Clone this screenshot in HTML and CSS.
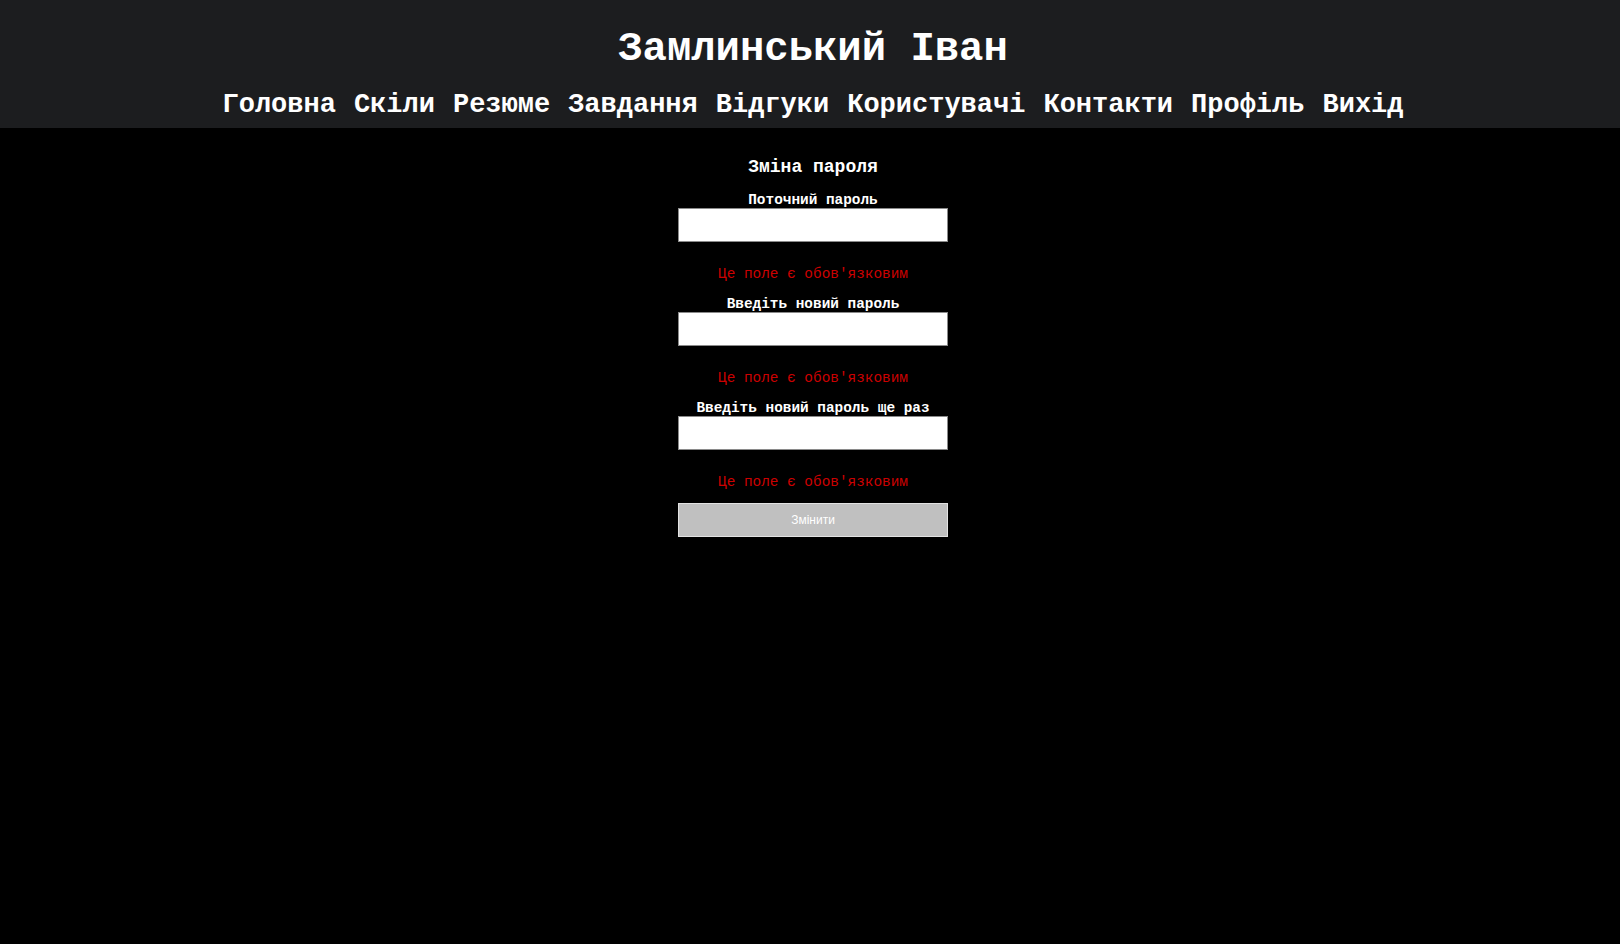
FILE: index.html
```html
<!DOCTYPE html>
<html lang="uk">
<head>
<meta charset="utf-8">
<title>Зміна пароля</title>
<link rel="stylesheet" href="styles.css">
</head>
<body>
<header class="site-header">
  <h1 class="site-title">Замлинський Іван</h1>
  <nav class="site-nav">
    <a href="#">Головна</a>
    <a href="#">Скіли</a>
    <a href="#">Резюме</a>
    <a href="#">Завдання</a>
    <a href="#">Відгуки</a>
    <a href="#">Користувачі</a>
    <a href="#">Контакти</a>
    <a href="#">Профіль</a>
    <a href="#">Вихід</a>
  </nav>
</header>
<main class="content">
  <form class="pw-form">
    <h2 class="form-title">Зміна пароля</h2>
    <div class="field">
      <label class="field-label">Поточний пароль</label>
      <input class="field-input" type="password">
      <p class="field-error">Це поле є обов'язковим</p>
    </div>
    <div class="field">
      <label class="field-label">Введіть новий пароль</label>
      <input class="field-input" type="password">
      <p class="field-error">Це поле є обов'язковим</p>
    </div>
    <div class="field field-last">
      <label class="field-label">Введіть новий пароль ще раз</label>
      <input class="field-input" type="password">
      <p class="field-error">Це поле є обов'язковим</p>
    </div>
    <button class="submit-btn" type="button">Змінити</button>
  </form>
</main>
</body>
</html>
```

FILE: styles.css
```css
html, body {
  margin: 0;
  padding: 0;
  background: #000;
  height: 100%;
}

body {
  font-family: "Liberation Mono", "Courier New", monospace;
  color: #fff;
}

.site-header {
  background: #1c1d1f;
  padding: 26px 0 8px 6px;
  text-align: center;
}

.site-title {
  margin: 0;
  font-size: 40.6px;
  line-height: 47px;
  font-weight: bold;
}

.site-nav {
  margin-top: 17px;
  display: flex;
  justify-content: center;
  gap: 18px;
  line-height: 30px;
}

.site-nav a {
  color: #fff;
  text-decoration: none;
  font-size: 27px;
  font-weight: bold;
}

.content {
  display: flex;
  justify-content: center;
  padding-left: 6px;
  padding-top: 29px;
}

.pw-form {
  width: 270px;
  display: flex;
  flex-direction: column;
  align-items: center;
}

.form-title {
  margin: 0 0 14px;
  font-size: 18px;
  line-height: 21px;
  font-weight: bold;
}

.field {
  width: 100%;
  display: flex;
  flex-direction: column;
  align-items: center;
}

.field-label {
  font-size: 14.4px;
  line-height: 16px;
  font-weight: bold;
}

.field-input {
  box-sizing: border-box;
  width: 270px;
  height: 34px;
  margin: 0;
  border: 1px solid #8a8a8a;
  background: #fff;
  padding: 0 4px;
}

.field-error {
  margin: 24px 0 14px;
  font-size: 14.4px;
  line-height: 16px;
  color: #cc0000;
}

.field-last .field-error {
  margin-bottom: 13px;
}

.submit-btn {
  box-sizing: border-box;
  width: 270px;
  height: 34px;
  background: #c0c0c0;
  border: 1px solid #e2e2e2;
  color: #fff;
  font-family: "Liberation Sans", Arial, sans-serif;
  font-size: 12px;
}
```
